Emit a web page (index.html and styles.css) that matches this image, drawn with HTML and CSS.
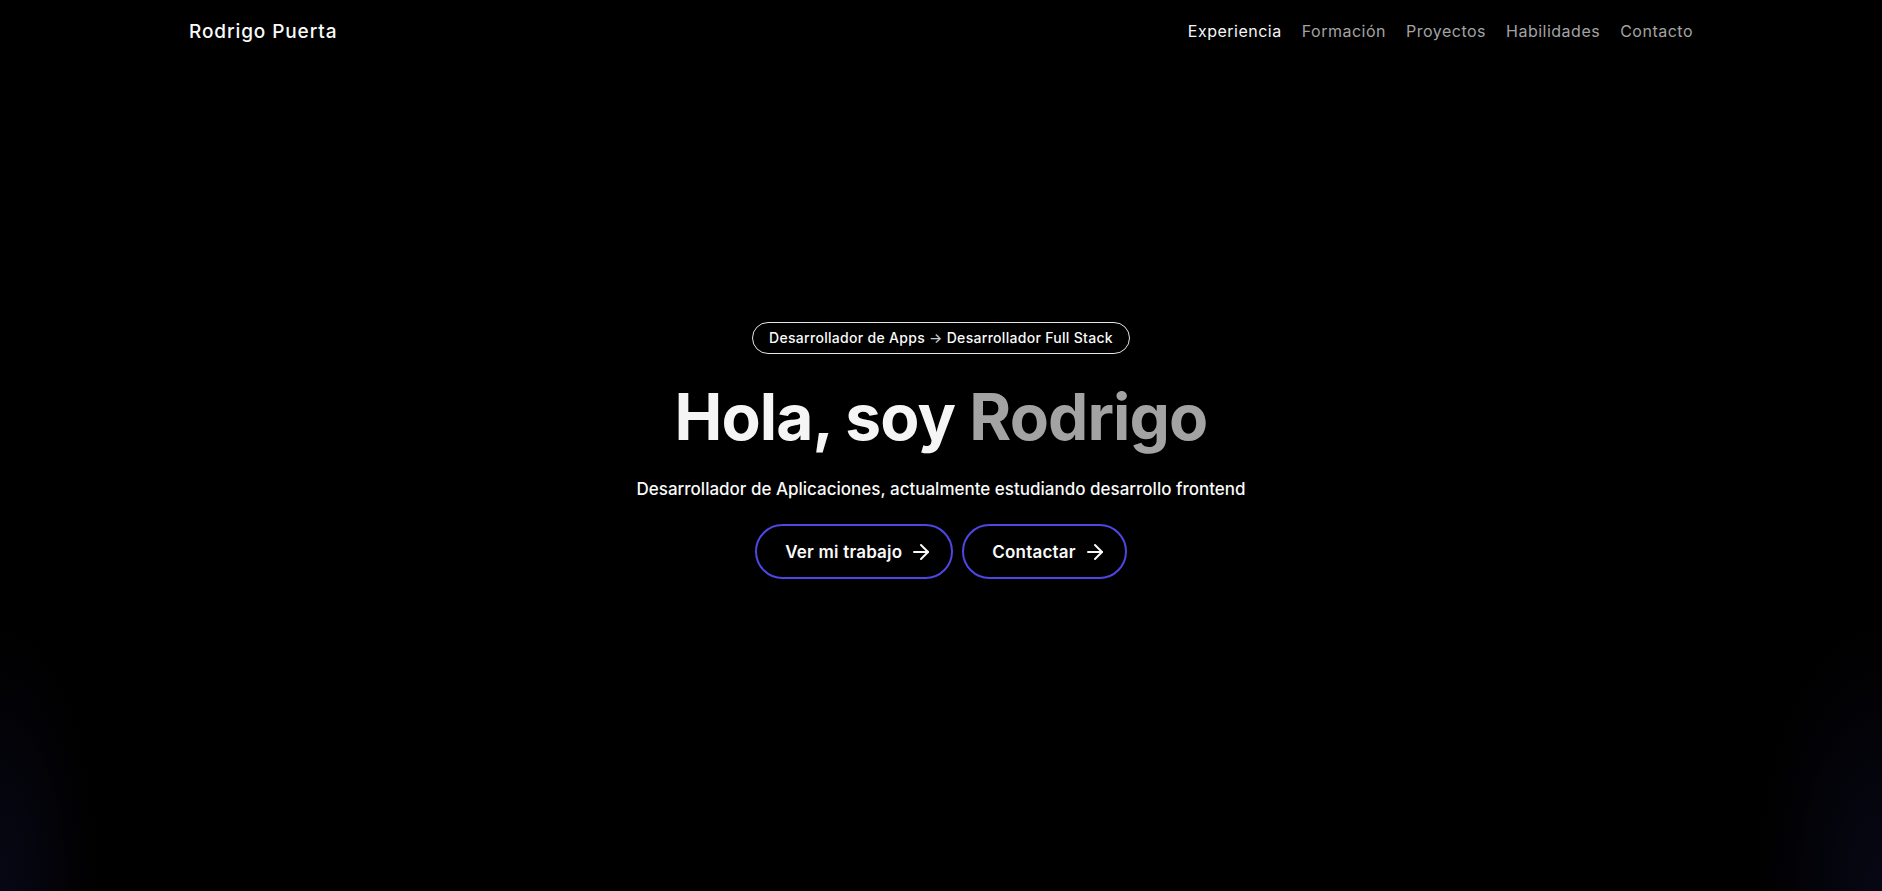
FILE: index.html
```html
<!DOCTYPE html>
<html lang="es">
<head>
<meta charset="utf-8">
<title>Rodrigo Puerta</title>
<link rel="stylesheet" href="styles.css">
</head>
<body>
<header class="site-header">
  <div class="header-inner">
    <a class="brand" href="#">Rodrigo Puerta</a>
    <nav class="nav">
      <a class="nav-link active" href="#experiencia">Experiencia</a>
      <a class="nav-link" href="#formacion">Formación</a>
      <a class="nav-link" href="#proyectos">Proyectos</a>
      <a class="nav-link" href="#habilidades">Habilidades</a>
      <a class="nav-link" href="#contacto">Contacto</a>
    </nav>
  </div>
</header>
<main class="hero">
  <div class="hero-content">
    <span class="badge">Desarrollador de Apps <span class="badge-arrow">→</span> Desarrollador Full Stack</span>
    <h1 class="title">Hola, soy <span class="title-accent">Rodrigo</span></h1>
    <p class="subtitle">Desarrollador de Aplicaciones, actualmente estudiando desarrollo frontend</p>
    <div class="actions">
      <a class="btn" href="#proyectos">Ver mi trabajo
        <svg class="btn-icon" viewBox="0 0 24 24" fill="none" stroke="currentColor" stroke-width="2" stroke-linecap="round" stroke-linejoin="round"><path d="M5 12h14"/><path d="M12 5l7 7-7 7"/></svg>
      </a>
      <a class="btn" href="#contacto">Contactar
        <svg class="btn-icon" viewBox="0 0 24 24" fill="none" stroke="currentColor" stroke-width="2" stroke-linecap="round" stroke-linejoin="round"><path d="M5 12h14"/><path d="M12 5l7 7-7 7"/></svg>
      </a>
    </div>
  </div>
</main>
</body>
</html>
```
FILE: styles.css
```css
* { box-sizing: border-box; }
html, body { margin: 0; padding: 0; }
body {
  background-color: #000;
  background-image:
    radial-gradient(ellipse 140px 380px at 0% 100%, rgba(20, 22, 60, 0.35), rgba(0,0,0,0) 70%),
    radial-gradient(ellipse 180px 380px at 100% 100%, rgba(20, 22, 60, 0.35), rgba(0,0,0,0) 70%);
  color: #f5f5f5;
  font-family: "Inter", "Open Sans", sans-serif;
  height: 100vh;
  overflow: hidden;
}
a { text-decoration: none; color: inherit; }

.site-header {
  position: absolute;
  top: 0; left: 0; right: 0;
  z-index: 10;
}
.header-inner {
  max-width: 1536px;
  margin: 0 auto;
  padding: 0 16px;
  height: 62px;
  display: flex;
  align-items: center;
  justify-content: space-between;
}
.brand {
  font-size: 19px;
  font-weight: 500;
  color: #fafafa;
  letter-spacing: 0.9px;
}
.nav {
  display: flex;
  gap: 20px;
}
.nav-link {
  font-size: 16px;
  color: #a3a3a3;
  letter-spacing: 0.5px;
}
.nav-link.active { color: #f5f5f5; }

.hero {
  height: 100vh;
  display: flex;
  align-items: center;
  justify-content: center;
  padding-top: 10px;
}
.hero-content {
  display: flex;
  flex-direction: column;
  align-items: center;
}
.badge {
  display: inline-flex;
  align-items: center;
  height: 32px;
  padding: 0 16px;
  border: 1px solid #e5e5e5;
  border-radius: 999px;
  font-size: 14px;
  font-weight: 500;
  letter-spacing: 0.3px;
  color: #fafafa;
}
.badge-arrow { color: #c8c8c8; margin: 0 4px; }
.title {
  margin: 25px 0 0;
  font-size: 64px;
  font-weight: 700;
  line-height: 1.2;
  letter-spacing: -0.9px;
  color: #f5f5f5;
}
.title-accent { color: #a3a3a3; }
.subtitle {
  margin: 24px 0 0;
  font-size: 17px;
  font-weight: 500;
  color: #fafafa;
}
.actions {
  margin-top: 25px;
  display: flex;
  gap: 9px;
}
.btn {
  display: inline-flex;
  align-items: center;
  gap: 7px;
  height: 55px;
  padding: 0 18px 0 28px;
  border: 2px solid #4f46e5;
  border-radius: 999px;
  font-size: 17px;
  font-weight: 600;
  letter-spacing: 0.2px;
  color: #fafafa;
}
.btn-icon { width: 24px; height: 24px; }
```
